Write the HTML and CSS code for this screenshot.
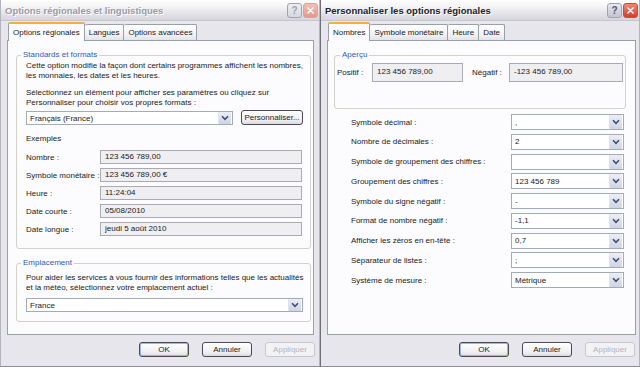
FILE: index.html
```
<!DOCTYPE html>
<html lang="fr">
<head>
    <meta charset="UTF-8">
    <title>Options régionales et linguistiques</title>
    <link rel="stylesheet" href="styles.css">
</head>
<body>
<div class="screen">
    <section class="dialog">
        <header class="titlebar inactive">
            <span class="title">Options régionales et linguistiques</span>
            <span class="tbtn help">?</span>
            <span class="tbtn close"><svg viewBox="0 0 15 15" width="15" height="15"><path d="M4.5 4.5 L10.5 10.5 M10.5 4.5 L4.5 10.5" stroke="#fff" stroke-width="1.7" stroke-linecap="round"/></svg></span>
        </header>
        <nav class="tabs">
            <span class="tab active">Options régionales</span>
            <span class="tab">Langues</span>
            <span class="tab">Options avancées</span>
        </nav>
        <div class="panel">
            <fieldset class="group group-formats">
                <legend>Standards et formats</legend>
                <p class="intro">Cette option modifie la façon dont certains programmes affichent les nombres,<br>les monnaies, les dates et les heures.</p>
                <p class="hint">Sélectionnez un élément pour afficher ses paramètres ou cliquez sur<br>Personnaliser pour choisir vos propres formats :</p>
                <div class="format-row">
                    <div class="combo combo-locale">
                        <span class="combo-value">Français (France)</span>
                        <span class="drop"><svg viewBox="0 0 8 6" width="8" height="6"><path d="M1 1.2 L4 4.4 L7 1.2" fill="none" stroke="#3d4e73" stroke-width="1.6"/></svg></span>
                    </div>
                    <button class="btn btn-custom">Personnaliser...</button>
                </div>
                <div class="examples-title">Exemples</div>
                <div class="examples">
                    <span class="lbl">Nombre :</span><span class="field">123 456 789,00</span>
                    <span class="lbl">Symbole monétaire :</span><span class="field">123 456 789,00 €</span>
                    <span class="lbl">Heure :</span><span class="field">11:24:04</span>
                    <span class="lbl">Date courte :</span><span class="field">05/08/2010</span>
                    <span class="lbl">Date longue :</span><span class="field">jeudi 5 août 2010</span>
                </div>
            </fieldset>
            <fieldset class="group group-location">
                <legend>Emplacement</legend>
                <p class="location-text">Pour aider les services à vous fournir des informations telles que les actualités<br>et la météo, sélectionnez votre emplacement actuel :</p>
                <div class="combo combo-country">
                    <span class="combo-value">France</span>
                    <span class="drop"><svg viewBox="0 0 8 6" width="8" height="6"><path d="M1 1.2 L4 4.4 L7 1.2" fill="none" stroke="#3d4e73" stroke-width="1.6"/></svg></span>
                </div>
            </fieldset>
        </div>
        <footer class="actions">
            <button class="btn btn-default">OK</button>
            <button class="btn">Annuler</button>
            <button class="btn" disabled>Appliquer</button>
        </footer>
    </section>

    <section class="dialog dialog-right">
        <header class="titlebar">
            <span class="title">Personnaliser les options régionales</span>
            <span class="tbtn help">?</span>
            <span class="tbtn close"><svg viewBox="0 0 15 15" width="15" height="15"><path d="M4.5 4.5 L10.5 10.5 M10.5 4.5 L4.5 10.5" stroke="#fff" stroke-width="1.7" stroke-linecap="round"/></svg></span>
        </header>
        <nav class="tabs">
            <span class="tab active">Nombres</span>
            <span class="tab">Symbole monétaire</span>
            <span class="tab">Heure</span>
            <span class="tab">Date</span>
        </nav>
        <div class="panel">
            <fieldset class="group group-preview">
                <legend>Aperçu</legend>
                <div class="preview">
                    <span class="lbl lbl-pos">Positif :</span>
                    <span class="field field-tall field-pos">123 456 789,00</span>
                    <span class="lbl lbl-neg">Négatif :</span>
                    <span class="field field-tall field-neg">-123 456 789,00</span>
                </div>
            </fieldset>
            <div class="settings">
                <span class="lbl">Symbole décimal :</span>
                <div class="combo"><span class="combo-value">,</span><span class="drop"><svg viewBox="0 0 8 6" width="8" height="6"><path d="M1 1.2 L4 4.4 L7 1.2" fill="none" stroke="#3d4e73" stroke-width="1.6"/></svg></span></div>
                <span class="lbl">Nombre de décimales :</span>
                <div class="combo"><span class="combo-value">2</span><span class="drop"><svg viewBox="0 0 8 6" width="8" height="6"><path d="M1 1.2 L4 4.4 L7 1.2" fill="none" stroke="#3d4e73" stroke-width="1.6"/></svg></span></div>
                <span class="lbl">Symbole de groupement des chiffres :</span>
                <div class="combo"><span class="combo-value"></span><span class="drop"><svg viewBox="0 0 8 6" width="8" height="6"><path d="M1 1.2 L4 4.4 L7 1.2" fill="none" stroke="#3d4e73" stroke-width="1.6"/></svg></span></div>
                <span class="lbl">Groupement des chiffres :</span>
                <div class="combo"><span class="combo-value">123 456 789</span><span class="drop"><svg viewBox="0 0 8 6" width="8" height="6"><path d="M1 1.2 L4 4.4 L7 1.2" fill="none" stroke="#3d4e73" stroke-width="1.6"/></svg></span></div>
                <span class="lbl">Symbole du signe négatif :</span>
                <div class="combo"><span class="combo-value">-</span><span class="drop"><svg viewBox="0 0 8 6" width="8" height="6"><path d="M1 1.2 L4 4.4 L7 1.2" fill="none" stroke="#3d4e73" stroke-width="1.6"/></svg></span></div>
                <span class="lbl">Format de nombre négatif :</span>
                <div class="combo"><span class="combo-value">-1,1</span><span class="drop"><svg viewBox="0 0 8 6" width="8" height="6"><path d="M1 1.2 L4 4.4 L7 1.2" fill="none" stroke="#3d4e73" stroke-width="1.6"/></svg></span></div>
                <span class="lbl">Afficher les zéros en en-tête :</span>
                <div class="combo"><span class="combo-value">0,7</span><span class="drop"><svg viewBox="0 0 8 6" width="8" height="6"><path d="M1 1.2 L4 4.4 L7 1.2" fill="none" stroke="#3d4e73" stroke-width="1.6"/></svg></span></div>
                <span class="lbl">Séparateur de listes :</span>
                <div class="combo"><span class="combo-value">;</span><span class="drop"><svg viewBox="0 0 8 6" width="8" height="6"><path d="M1 1.2 L4 4.4 L7 1.2" fill="none" stroke="#3d4e73" stroke-width="1.6"/></svg></span></div>
                <span class="lbl">Système de mesure :</span>
                <div class="combo"><span class="combo-value">Métrique</span><span class="drop"><svg viewBox="0 0 8 6" width="8" height="6"><path d="M1 1.2 L4 4.4 L7 1.2" fill="none" stroke="#3d4e73" stroke-width="1.6"/></svg></span></div>
            </div>
        </div>
        <footer class="actions">
            <button class="btn btn-default">OK</button>
            <button class="btn">Annuler</button>
            <button class="btn" disabled>Appliquer</button>
        </footer>
    </section>
</div>
</body>
</html>
```

FILE: styles.css
```
* {
    box-sizing: border-box;
}
body {
    margin: 0;
    font-family: "Liberation Sans", Arial, sans-serif;
    font-size: 8px;
    color: #1a1a1a;
    background: #d4d4da;
}
.screen {
    display: flex;
    width: 640px;
    height: 367px;
    overflow: hidden;
}
.dialog {
    width: 320px;
    height: 367px;
    display: flex;
    flex-direction: column;
    background: #e6e6ec;
    border: 1px solid #b4b4bc;
    border-top: 0;
    border-bottom-color: #8c8c94;
}
.dialog-right {
    border-left-color: #6f6f78;
}

/* title bar */
.titlebar {
    height: 21px;
    flex: none;
    display: flex;
    align-items: center;
    padding: 0 1px 0 4px;
    background: linear-gradient(#ffffff, #f3f3f5 35%, #e2e2e7 70%, #d5d5db);
    border-bottom: 1px solid #c6c6cc;
}
.title {
    flex: 1;
    font-weight: bold;
    font-size: 9.5px;
    color: #222228;
    text-shadow: 1px 1px 0 #ffffff;
}
.inactive .title {
    color: #9c9ca6;
}
.tbtn {
    width: 15px;
    height: 15px;
    margin-left: 1px;
    border-radius: 3px;
    display: flex;
    align-items: center;
    justify-content: center;
}
.help {
    background: linear-gradient(#e8e8ee, #c4c4cf);
    border: 1px solid #a2a2ae;
    color: #55556a;
    font-weight: bold;
    font-size: 10px;
}
.close {
    background: linear-gradient(#ef8a7a, #d4402c);
    border: 1px solid #b8533f;
}
.inactive .help {
    color: #a0a0ae;
    background: linear-gradient(#eeeef2, #d6d6de);
}
.inactive .close {
    background: linear-gradient(#f2c0b6, #e3998c);
    border-color: #d9a398;
}

/* tabs */
.tabs {
    height: 19px;
    padding-left: 7px;
    display: flex;
    align-items: flex-end;
    flex: none;
}
.tab {
    height: 16px;
    padding: 0 4px;
    line-height: 15px;
    background: linear-gradient(#ffffff, #f0f0f3 70%, #e3e3e8);
    border: 1px solid #9aa0a8;
    border-bottom: 0;
    border-left: 0;
    border-radius: 2px 2px 0 0;
}
.tab:first-child {
    border-left: 1px solid #9aa0a8;
}
.tab.active {
    height: 19px;
    margin-bottom: -1px;
    padding: 0 4px;
    line-height: 18px;
    background: #fcfcfe;
    border-top: 2px solid #f3b03f;
    position: relative;
    z-index: 1;
}

/* panel */
.panel {
    width: 307px;
    height: 295px;
    margin-left: 6px;
    padding: 0 0 0 8px;
    background: #fcfcfe;
    border: 1px solid #98a0a8;
    flex: none;
}
.dialog-right .panel {
    width: 309px;
    padding-left: 6px;
}
.group {
    margin: 9px 0 0;
    padding: 0 7px 0 9px;
    border: 1px solid #d2d2c8;
    border-radius: 3px;
    width: 295px;
    min-width: 0;
}
.group legend {
    margin-left: -5px;
    padding: 0 2px;
    line-height: 10px;
    color: #2a5cb8;
}
.group p {
    margin: 0;
    line-height: 10px;
    white-space: nowrap;
}
.intro {
    padding-top: 1px;
}
.group .hint {
    margin-top: 7px;
}
.format-row {
    margin-top: 3px;
    display: flex;
    gap: 8px;
    height: 14px;
}
.combo {
    height: 14px;
    display: flex;
    align-items: center;
    background: #ffffff;
    border: 1px solid #a2abb8;
}
.combo-value {
    flex: 1;
    padding-left: 3px;
    white-space: nowrap;
}
.drop {
    width: 13px;
    height: 100%;
    margin-right: 1px;
    display: flex;
    align-items: center;
    justify-content: center;
    background: linear-gradient(#eceef6, #cfd4e4);
    border-left: 1px solid #dfe2ec;
    border-radius: 1px;
}
.combo-locale {
    width: 207px;
}
.btn {
    height: 15px;
    width: 50px;
    padding: 0;
    font-family: inherit;
    font-size: 8px;
    color: #1a1a1a;
    background: linear-gradient(#ffffff, #f0f0f3 70%, #d9d9e0);
    border: 1px solid #4a4a54;
    border-radius: 3px;
}
.btn-custom {
    width: 62px;
    height: 15px;
    margin-top: -1px;
}
.btn-default {
    box-shadow: inset 0 0 0 1px #9eb8e6;
}
.btn:disabled {
    color: #b4b4bc;
    border-color: #c8c8d0;
    background: #f2f2f5;
}
.examples-title {
    margin-top: 9px;
    line-height: 10px;
}
.examples {
    margin-top: 6px;
    display: grid;
    grid-template-columns: 74px 202px;
    grid-auto-rows: 14px;
    row-gap: 4px;
    padding-bottom: 12px;
    align-items: center;
}
.field {
    height: 14px;
    line-height: 12px;
    padding-left: 4px;
    background: #efeff1;
    border: 1px solid #aaaab2;
    white-space: nowrap;
}
.group-location {
    margin-top: 9px;
    padding-bottom: 9px;
}
.group .location-text {
    margin-top: 5px;
}
.combo-country {
    margin-top: 5px;
    width: 277px;
}

/* right dialog */
.group-preview {
    width: 292px;
    padding: 0 2px 26px 2px;
}
.group-preview legend {
    margin-left: 3px;
}
.preview {
    margin-top: 3px;
    display: flex;
    align-items: flex-start;
}
.preview .lbl {
    padding-top: 5px;
}
.lbl-pos {
    width: 35px;
}
.lbl-neg {
    width: 37px;
    margin-left: 9px;
}
.field-tall {
    height: 19px;
    padding-top: 2px;
}
.field-pos {
    width: 91px;
}
.field-neg {
    width: 114px;
}
.settings {
    margin: 5px 0 0 17px;
    display: grid;
    grid-template-columns: 160px 113px;
    grid-auto-rows: 16px;
    row-gap: 3.75px;
    align-items: center;
}
.settings .combo {
    height: 16px;
}
.lbl {
    white-space: nowrap;
}

/* bottom buttons */
.actions {
    margin-top: 7px;
    padding-right: 4px;
    display: flex;
    justify-content: flex-end;
    gap: 13px;
}
```
